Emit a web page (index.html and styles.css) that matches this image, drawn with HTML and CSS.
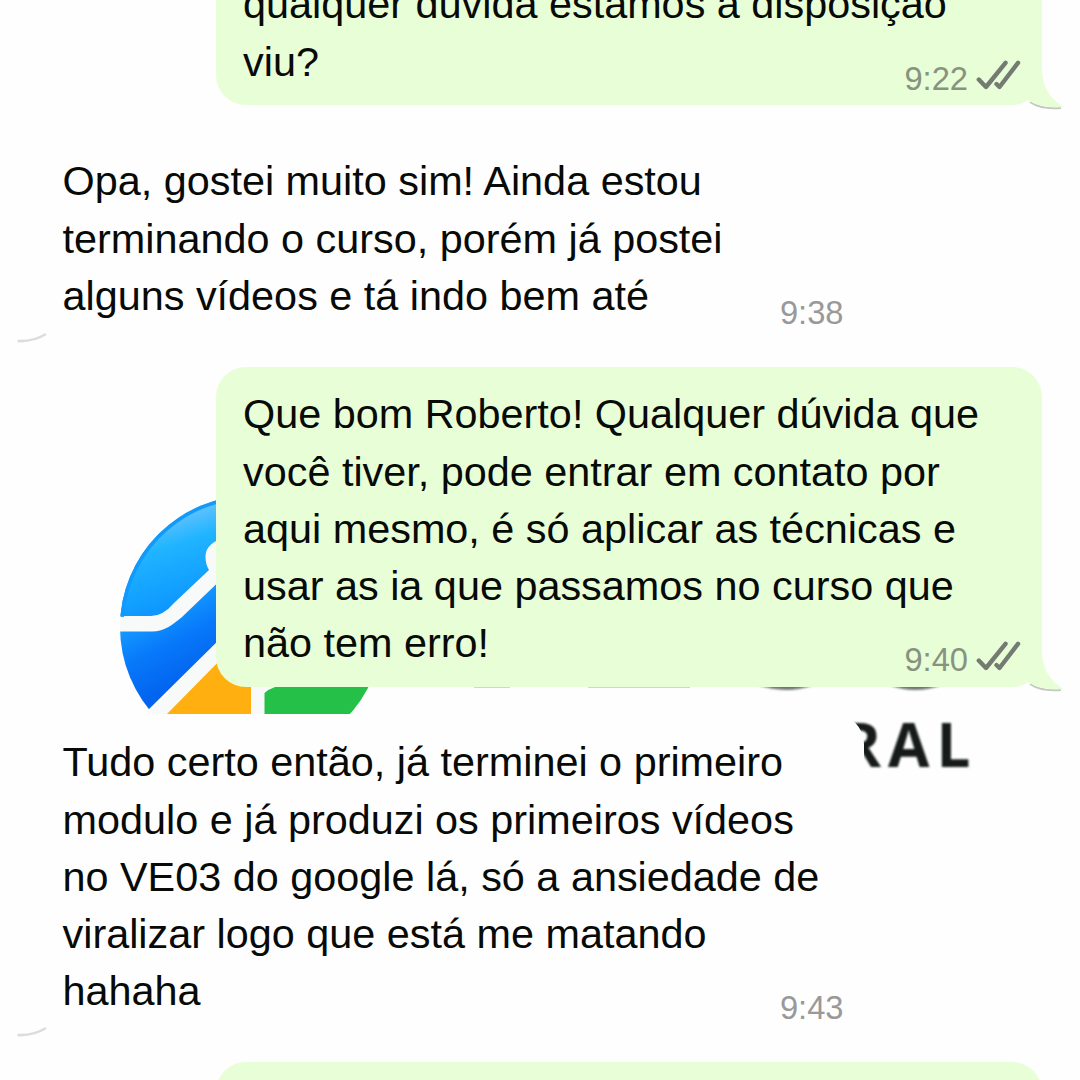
FILE: index.html
```html
<!DOCTYPE html>
<html lang="pt-BR">
<head>
<meta charset="utf-8">
<title>Conversa</title>
<link rel="stylesheet" href="styles.css">
</head>
<body>
<svg class="watermark" viewBox="0 0 1080 1080" aria-hidden="true">
  <defs>
    <linearGradient id="sky" gradientUnits="userSpaceOnUse" x1="160" y1="520" x2="190" y2="610"><stop offset="0" stop-color="#62c2ff"/><stop offset=".3" stop-color="#1fb4ff"/><stop offset="1" stop-color="#0b93ff"/></linearGradient>
    <linearGradient id="blue" gradientUnits="userSpaceOnUse" x1="135" y1="622" x2="170" y2="690"><stop offset="0" stop-color="#149bff"/><stop offset=".45" stop-color="#0879fa"/><stop offset="1" stop-color="#0263ee"/></linearGradient>
    <clipPath id="disc"><circle cx="251.5" cy="627" r="131.5"/></clipPath>
  </defs>
  <g clip-path="url(#disc)">
    <path fill="#f8faf9" d="M110 480h290v240H110z"/>
    <path fill="url(#sky)" d="M110 480H230V536Q205 542 205.500 557Q205.500 564 209 570L174 603Q163 616 151 616H110z"/>
    <path fill="url(#blue)" d="M110 631.500H152C165 631.500 173 624 182 617L230 571V629L149 709L130 725H110z"/>
    <path fill="#ffb010" d="M230 650L165 716H251V680H230z"/>
    <path fill="#24c048" d="M264.500 716V693Q269 689 275 687V680H400V716z"/>
    <circle cx="251.500" cy="627" r="130" fill="none" stroke="#1199fb" stroke-width="4" stroke-dasharray="205 700" transform="rotate(184.500 251.500 627)"/>
  </g>
  <path fill="#aaa" d="M474 685h36v2.500h-36zM588 685h102v2.500H588z"/>
  <path class="soft" fill="#6f7473" d="M758 685Q786 695 814 685zM889 685Q915 695 942 685z"/>
  <text class="wordmark soft" x="841.500" y="767">RAL</text>
</svg>
<svg class="symbols" aria-hidden="true">
  <symbol id="checks" viewBox="0 0 46 32"><path d="M2.800 19.500L10 27L29.500 2.800M20.500 24L23.500 27L42 2.800" fill="none" stroke="#757b73" stroke-width="4.400" stroke-linecap="round" stroke-linejoin="round"/></symbol>
  <symbol id="tail" viewBox="0 0 40 64"><path d="M2 53C10 58.500 22 60 33 59" fill="none" stroke="#c4c9c0" stroke-width="2"/><path d="M0 23H14C15 39 22 49 35 58C22 59 8 57 0 51z" fill="#e7fed7"/></symbol>
  <symbol id="edge" viewBox="0 0 32 12"><path d="M1.500 9Q17 10 30 2" fill="none" stroke="#dcdcdc" stroke-width="2.600"/></symbol>
</svg>
<main class="chat">
  <article class="bubble out first">
    <p class="text">qualquer dúvida estamos a disposição<br>viu?</p>
    <footer class="meta"><time>9:22</time><svg class="checks"><use href="#checks"/></svg></footer>
    <svg class="tail"><use href="#tail"/></svg>
  </article>
  <article class="bubble in reply">
    <p class="text">Opa, gostei muito sim! Ainda estou<br>terminando o curso, porém já postei<br>alguns vídeos e tá indo bem até</p>
    <footer class="meta"><time>9:38</time></footer>
    <svg class="edge"><use href="#edge"/></svg>
  </article>
  <article class="bubble out second">
    <p class="text">Que bom Roberto! Qualquer dúvida que<br>você tiver, pode entrar em contato por<br>aqui mesmo, é só aplicar as técnicas e<br>usar as ia que passamos no curso que<br>não tem erro!</p>
    <footer class="meta"><time>9:40</time><svg class="checks"><use href="#checks"/></svg></footer>
    <svg class="tail"><use href="#tail"/></svg>
  </article>
  <article class="bubble in last">
    <p class="text">Tudo certo então, já terminei o primeiro<br>modulo e já produzi os primeiros vídeos<br>no VE03 do google lá, só a ansiedade de<br>viralizar logo que está me matando<br>hahaha</p>
    <footer class="meta"><time>9:43</time></footer>
    <svg class="edge"><use href="#edge"/></svg>
  </article>
  <article class="bubble out next"></article>
</main>
</body>
</html>
```
FILE: styles.css
```css
* { box-sizing: border-box; }
body {
  margin: 0;
  width: 1080px;
  height: 1080px;
  overflow: hidden;
  position: relative;
  background: #fefefe;
  color: #070a06;
  font-family: "Liberation Sans", Arial, sans-serif;
}
.watermark { position: absolute; inset: 0; width: 1080px; height: 1080px; }
.wordmark { font: 700 60px "Open Sans", sans-serif; letter-spacing: 7px; fill: #161b1a; }
.soft { filter: blur(.8px); }
.symbols { position: absolute; width: 0; height: 0; }
.chat {
  position: relative;
  height: 1080px;
  overflow: hidden;
  display: flex;
  flex-direction: column;
}
.bubble {
  position: relative;
  flex: none;
  border-radius: 30px;
  padding: 19.400px 22px 0 27px;
}
.out { align-self: flex-end; width: 826px; margin-right: 38px; background: #e7fed7; }
.in { align-self: flex-start; width: 826px; margin-left: 38px; padding-left: 24.500px; background: #fefefe; }
.first { height: 148px; margin-top: -43px; }
.reply { height: 206px; margin-top: 29px; }
.second { height: 319.500px; margin-top: 27px; }
.last { height: 320px; margin-top: 27.500px; padding-top: 20.400px; }
.next { height: 100px; margin-top: 28px; }
.text { margin: 0; font-size: 41.380px; line-height: 57.200px; white-space: nowrap; }
.meta {
  position: absolute;
  right: 20px;
  bottom: 7px;
  display: flex;
  align-items: center;
  gap: 8px;
  font-size: 32.700px;
  line-height: 38px;
  color: #87937f;
}
.second .meta { bottom: 7.600px; }
.in .meta { right: 20.500px; bottom: 8px; color: #999; }
.last .meta { bottom: 7.500px; }
.checks { width: 46px; height: 32px; margin-top: -6px; }
.tail { position: absolute; right: -26px; bottom: -8px; width: 40px; height: 64px; }
.edge { position: absolute; left: -22px; bottom: -4px; width: 32px; height: 12px; }
```
